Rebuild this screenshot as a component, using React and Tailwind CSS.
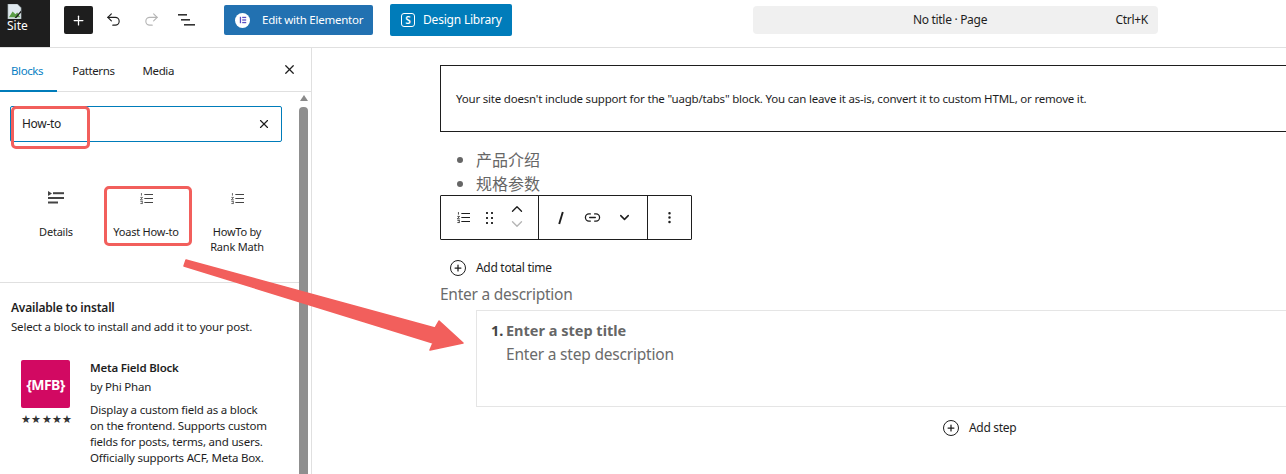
import React from "react";
import { ChevronDown, ChevronUp, Link2, MoreVertical, Plus, Redo2, Undo2, X } from "lucide-react";

const font = "font-['Noto_Sans','Open_Sans',sans-serif]";

const NumberedList = ({ className = "" }) => (
    <svg viewBox="0 0 18 16" className={className} fill="none" stroke="currentColor">
        <path d="M6 2.5h12M6 8h12M6 13.5h12" strokeWidth="1.5" />
        <path d="M2 0.5v3.5M0.5 6.5h3L0.5 9.8h3.4M0.5 12h3.2M0.5 15h3.2M3.2 12v3" strokeWidth="1.1" />
    </svg>
);

const DetailsIcon = () => (
    <svg viewBox="0 0 16 14" className="w-[16px] h-[14px]" fill="#444">
        <path d="M0 0l4 2.5L0 5z" />
        <rect x="5" y="1.2" width="11" height="2" />
        <rect x="0" y="6" width="16" height="2" />
        <rect x="0" y="10.5" width="10" height="2" />
    </svg>
);

const BlockItem = ({ icon, children }) => (
    <div className="w-[82px] flex flex-col items-center text-center">
        <div className="h-[14px] flex items-center justify-center text-[#444]">{icon}</div>
        <div className="mt-[19px] text-[11px] leading-[15px] text-[#1e1e1e] tracking-[-0.22px]">{children}</div>
    </div>
);

const Sidebar = () => (
    <aside className="w-[312px] shrink-0 h-full border-r border-[#e0e0e0] relative overflow-hidden">
        <div className="h-[44px] border-b border-[#e0e0e0] flex items-start pl-[11px] pt-[15px] text-[11.5px] leading-[16px] text-[#1e1e1e] tracking-[-0.4px]">
            <span className="text-[#0a7fc4]">Blocks</span>
            <span className="ml-[29px]">Patterns</span>
            <span className="ml-[28px]">Media</span>
            <X size={15} strokeWidth={2} className="ml-auto mr-[14px] mt-[-1px] text-[#1e1e1e]" />
        </div>
        <div className="absolute left-0 top-[42px] w-[57px] h-[2px] bg-[#007cba]" />

        {/* scrollbar */}
        <div className="absolute left-[299px] top-[47px] bottom-0 w-[9px]">
            <div className="mx-auto mt-[0px] w-0 h-0 border-x-[4px] border-x-transparent border-b-[6px] border-b-[#8a8a8a]" />
            <div className="mt-[6px] w-[9px] h-[400px] bg-[#8f8f8f] rounded-t-[4px]" />
        </div>

        <div className="w-[299px]">
            <div className="mt-[14px] ml-[10px] w-[272px] h-[36px] border border-[#007cba] rounded-[2px] flex items-center pl-[11px] pr-[10px] text-[12px] text-[#1e1e1e] tracking-[-0.3px]">
                <span>How-to</span>
                <X size={14} strokeWidth={2} className="ml-auto" />
            </div>
            <div className="mt-[49px] pl-[15px] flex h-[91px]">
                <BlockItem icon={<DetailsIcon />}>Details</BlockItem>
                <div className="ml-[8px]">
                    <BlockItem icon={<NumberedList className="w-[13px] h-[13px]" />}>Yoast How-to</BlockItem>
                </div>
                <div className="ml-[9px] w-[82px]">
                    <BlockItem icon={<NumberedList className="w-[13px] h-[13px]" />}>HowTo by<br />Rank Math</BlockItem>
                </div>
            </div>
            <div className="border-t border-[#e0e0e0] pl-[11px] pt-[17px]">
                <div className="text-[12px] leading-[16px] font-semibold text-[#1e1e1e] tracking-[-0.2px]">Available to install</div>
                <div className="mt-[3px] text-[11.5px] leading-[16px] text-[#1e1e1e] tracking-[-0.2px]">Select a block to install and add it to your post.</div>
                <div className="mt-[25px] flex">
                    <div className="ml-[10px] w-[49px] shrink-0">
                        <div className="w-[49px] h-[48px] bg-[#d20962] rounded-[2px] flex items-center justify-center text-white font-bold text-[14px] tracking-[-0.6px]">{"{MFB}"}</div>
                        <div className="mt-[4px] w-[51px] flex justify-between text-[#333] text-[11px] leading-[14px]">
                            <span>★</span><span>★</span><span>★</span><span>★</span><span>★</span>
                        </div>
                    </div>
                    <div className="ml-[20px] w-[190px] text-[11.5px] text-[#1e1e1e] tracking-[-0.2px]">
                        <div className="font-semibold leading-[16px]">Meta Field Block</div>
                        <div className="leading-[16px] mt-[3px]">by Phi Phan</div>
                        <div className="leading-[16px] mt-[7px]">Display a custom field as a block<br />on the frontend. Supports custom<br />fields for posts, terms, and users.<br />Officially supports ACF, Meta Box.</div>
                    </div>
                </div>
            </div>
        </div>
    </aside>
);

const Header = () => (
    <header className="h-[48px] shrink-0 border-b border-[#e0e0e0] flex items-start bg-white">
        <div className="w-[50px] h-[47px] bg-[#1e1e1e] text-white pl-[7px] pt-[4px] shrink-0">
            <svg viewBox="0 0 16 16" className="w-[15px] h-[15px]">
                <path d="M1 0h10l4 4v12H1z" fill="#dfe8ee" stroke="#9aa" strokeWidth="0.6" />
                <path d="M2 14l4-6 3 3 2-2 3 5z" fill="#5a9e46" />
                <path d="M8 15l7-8v2l-5 6z" fill="#222" />
            </svg>
            <div className="text-[12px] leading-[14px] mt-[0px]">Site</div>
        </div>
        <div className="ml-[14px] mt-[6px] w-[29px] h-[28px] bg-[#1e1e1e] rounded-[2px] flex items-center justify-center text-white">
            <Plus size={15} strokeWidth={2} />
        </div>
        <Undo2 size={17} strokeWidth={1.6} className="ml-[12px] mt-[11px] text-[#1e1e1e]" />
        <Redo2 size={17} strokeWidth={1.6} className="ml-[21px] mt-[11px] text-[#b5b5b5]" />
        <svg viewBox="0 0 17 12" className="ml-[18px] mt-[14px] w-[17px] h-[12px]" fill="#333">
            <rect x="0" y="0" width="9" height="1.6" />
            <rect x="3" y="5" width="9" height="1.6" />
            <rect x="6" y="10" width="11" height="1.6" />
        </svg>
        <div className="ml-[29px] mt-[5px] w-[149px] h-[30px] bg-[#2271b1] rounded-[2px] flex items-center pl-[11px] text-white text-[11.5px] tracking-[-0.25px]">
            <span className="w-[15px] h-[15px] rounded-full bg-white flex items-center justify-center">
                <svg viewBox="0 0 10 10" className="w-[8px] h-[8px]" fill="#5b4fc4">
                    <rect x="1" y="1" width="1.6" height="8" />
                    <rect x="4" y="1" width="5" height="1.6" />
                    <rect x="4" y="4.2" width="5" height="1.6" />
                    <rect x="4" y="7.4" width="5" height="1.6" />
                </svg>
            </span>
            <span className="ml-[12px]">Edit with Elementor</span>
        </div>
        <div className="ml-[17px] mt-[4px] w-[122px] h-[32px] bg-[#007cba] rounded-[2px] flex items-center pl-[11px] text-white text-[12px] tracking-[-0.2px]">
            <span className="w-[14px] h-[14px] border border-white rounded-[3px] flex items-center justify-center text-[10px] leading-none font-semibold">S</span>
            <span className="ml-[8px]">Design Library</span>
        </div>
        <div className="ml-[241px] mt-[6px] w-[405px] h-[28px] bg-[#f0f0f0] rounded-[4px] relative flex items-center justify-center pr-[11px] text-[12px] text-[#1e1e1e] tracking-[-0.3px]">
            <span>No title · Page</span>
            <span className="absolute right-[10px]">Ctrl+K</span>
        </div>
    </header>
);

const ToolbarButton = ({ className = "", children }) => (
    <div className={`flex items-center justify-center ${className}`}>{children}</div>
);

const Editor = () => (
    <main className="flex-1 min-w-0 overflow-hidden pl-[128px] pt-[17px]">
        <div className="w-[900px] h-[67px] border border-[#1e1e1e] pl-[15px] pt-[1px] flex items-center text-[11.5px] text-[#1e1e1e] tracking-[-0.2px]">
            Your site doesn't include support for the "uagb/tabs" block. You can leave it as-is, convert it to custom HTML, or remove it.
        </div>
        <ul className="mt-[15px] pl-[36px] list-disc text-[16px] leading-[24px] text-[#666] font-['Noto_Sans_CJK_SC',sans-serif]">
            <li>产品介绍</li>
            <li>规格参数</li>
        </ul>
        <div className="w-[252px] h-[45px] border border-[#1e1e1e] rounded-[1px] flex bg-white text-[#1e1e1e]">
            <div className="w-[98px] border-r border-[#1e1e1e] flex items-center pl-[16px]">
                <NumberedList className="w-[13px] h-[13px]" />
                <div className="ml-[16px] grid grid-cols-2 gap-x-[3px] gap-y-[3px]">
                    {[0, 1, 2, 3, 4, 5].map((i) => (
                        <span key={i} className="w-[2px] h-[2px] bg-[#333]" />
                    ))}
                </div>
                <div className="ml-[15px] flex flex-col -mt-[3px]">
                    <ChevronUp size={18} strokeWidth={1.8} />
                    <ChevronDown size={18} strokeWidth={1.8} className="text-[#b5b5b5] -mt-[3px]" />
                </div>
            </div>
            <div className="w-[109px] border-r border-[#1e1e1e] flex items-center">
                <svg viewBox="0 0 8 14" className="ml-[18px] w-[8px] h-[14px]" fill="none" stroke="#1e1e1e" strokeWidth="1.9">
                    <path d="M5.8 1L2.2 13" />
                </svg>
                <ToolbarButton className="ml-[19px]"><Link2 size={17} strokeWidth={1.8} /></ToolbarButton>
                <ToolbarButton className="ml-[16px]"><ChevronDown size={15} strokeWidth={2.4} /></ToolbarButton>
            </div>
            <ToolbarButton className="flex-1"><MoreVertical size={15} strokeWidth={2} /></ToolbarButton>
        </div>
        <div className="mt-[19px] ml-[10px] h-[18px] flex items-center text-[12px] text-[#1e1e1e] tracking-[-0.3px]">
            <span className="w-[16px] h-[16px] rounded-full border-[1.5px] border-[#1e1e1e] flex items-center justify-center">
                <Plus size={10} strokeWidth={3} />
            </span>
            <span className="ml-[10px]">Add total time</span>
        </div>
        <div className="mt-[7px] text-[15.5px] leading-[20px] text-[#6b6b6b] tracking-[-0.25px]">Enter a description</div>
        <div className="mt-[6px] ml-[36px] w-[900px] h-[97px] border border-[#e5e5e5] pl-[14px] pt-[9px] text-[14.5px] leading-[20px] text-[#666]">
            <div className="flex font-bold">
                <span className="text-[#444] w-[15px]">1.</span>
                <span>Enter a step title</span>
            </div>
            <div className="ml-[15px] mt-[4px] text-[#6b6b6b] text-[15.5px] tracking-[-0.2px]">Enter a step description</div>
        </div>
        <div className="mt-[12px] ml-[503px] h-[18px] flex items-center text-[12px] text-[#1e1e1e] tracking-[-0.3px]">
            <span className="w-[16px] h-[16px] rounded-full border-[1.5px] border-[#1e1e1e] flex items-center justify-center">
                <Plus size={10} strokeWidth={3} />
            </span>
            <span className="ml-[10px]">Add step</span>
        </div>
    </main>
);

const Annotations = () => (
    <>
        <div className="absolute left-[11px] top-[106px] w-[79px] h-[43px] border-[3px] border-[#f25f5c] rounded-[5px]" />
        <div className="absolute left-[104px] top-[186px] w-[88px] h-[60px] border-[3px] border-[#f25f5c] rounded-[5px]" />
        <svg className="absolute left-0 top-0 w-[1286px] h-[474px] pointer-events-none" viewBox="0 0 1286 474">
            <path
                d="M186 260L435 328L439 321L463 343L430 350L433 343L184 266Z"
                fill="#f25f5c"
                stroke="#f25f5c"
                strokeWidth="1.5"
                strokeLinejoin="round"
            />
        </svg>
    </>
);

const App = () => (
    <div className={`relative w-[1286px] h-[474px] overflow-hidden bg-white flex flex-col ${font}`}>
        <Header />
        <div className="flex flex-1 min-h-0">
            <Sidebar />
            <Editor />
        </div>
        <Annotations />
    </div>
);

export default App;
